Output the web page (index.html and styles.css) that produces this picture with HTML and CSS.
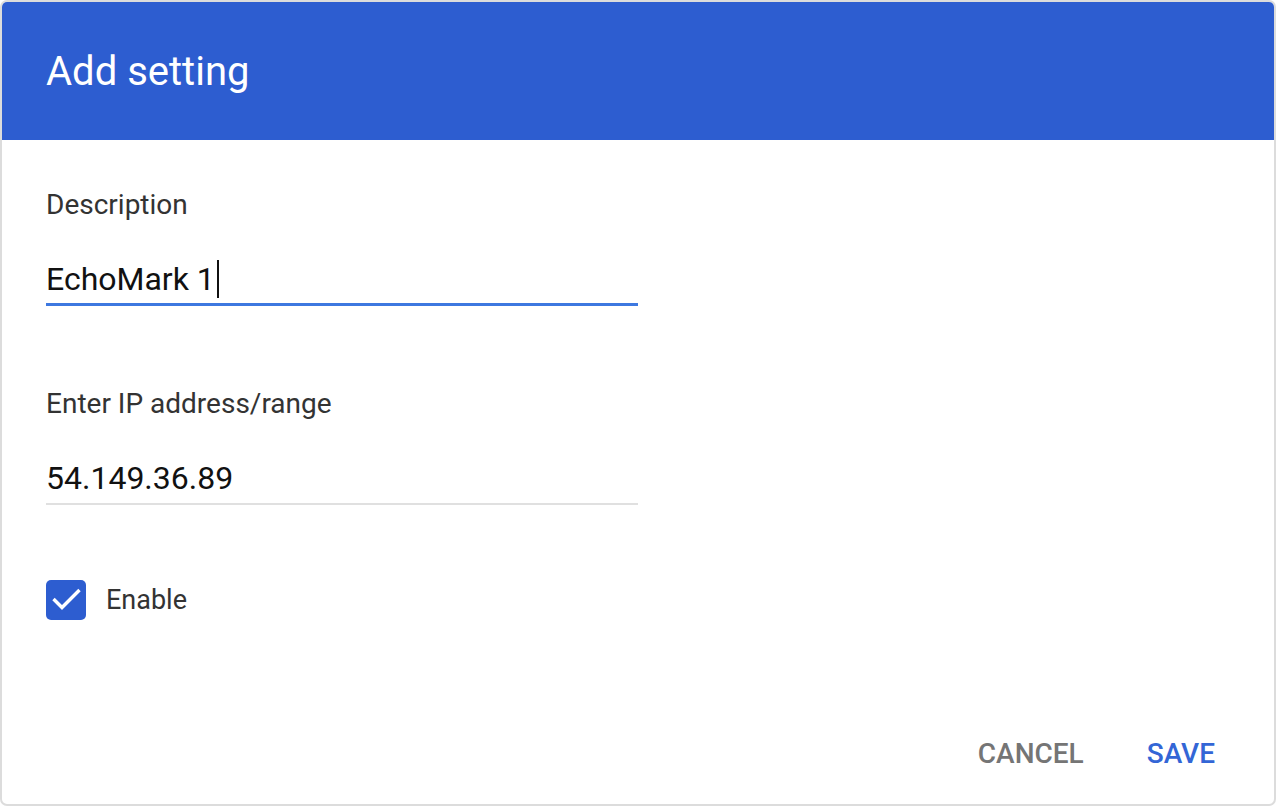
FILE: index.html
```html
<!DOCTYPE html>
<html lang="en">
<head>
    <meta charset="UTF-8">
    <meta name="viewport" content="width=device-width, initial-scale=1.0">
    <title>Add setting</title>
    <link rel="stylesheet" href="styles.css">
</head>
<body>
    <div class="dialog">
        <header>
            <h1>Add setting</h1>
        </header>

        <form>
            <label class="field">
                <span>Description</span>
                <div class="input focused">EchoMark 1<i class="caret"></i></div>
            </label>

            <label class="field">
                <span>Enter IP address/range</span>
                <div class="input">54.149.36.89</div>
            </label>

            <label class="check">
                <span class="box">
                    <svg viewBox="0 0 40 40" width="40" height="40">
                        <path d="M7.5 19l8.5 8.5L33.5 10" fill="none" stroke="#fff" stroke-width="3.4"/>
                    </svg>
                </span>
                Enable
            </label>
        </form>

        <footer>
            <button class="cancel">Cancel</button>
            <button class="save">Save</button>
        </footer>
    </div>
</body>
</html>
```

FILE: styles.css
```css
* {
    box-sizing: border-box;
}

html, body {
    margin: 0;
    height: 100%;
}

body {
    font-family: Roboto, 'Liberation Sans', sans-serif;
    background: #fff;
    color: #212121;
}

.dialog {
    height: 100%;
    border: 2px solid #dcdcdc;
    border-radius: 7px;
    overflow: hidden;
    display: flex;
    flex-direction: column;
}

header {
    background: #2d5dd0;
    height: 138px;
    padding: 0 44px;
    display: flex;
    align-items: center;

    h1 {
        margin: 0;
        color: #fff;
        font-size: 40px;
        font-weight: 400;
    }
}

form {
    flex-grow: 1;
    padding: 49px 44px 0;
    display: flex;
    flex-direction: column;
}

.field {
    display: flex;
    flex-direction: column;
    width: 592px;
    margin-bottom: 82px;

    > span {
        font-size: 28px;
        line-height: 32px;
        color: #333;
    }

    .input {
        margin-top: 38px;
        font-size: 32px;
        line-height: 40px;
        color: #111;
        padding-bottom: 5px;
        border-bottom: 2px solid #e0e0e0;
        display: flex;
        align-items: center;
    }

    .focused {
        padding-bottom: 4px;
        border-bottom: 3px solid #3d78e0;
    }

    &:nth-child(2) {
        margin-bottom: 75px;
    }
}

.caret {
    width: 2px;
    height: 38px;
    background: #111;
    margin-left: 2px;
}

.check {
    display: flex;
    align-items: center;
    gap: 20px;
    font-size: 27px;
    color: #333;

    .box {
        width: 40px;
        height: 40px;
        border-radius: 5px;
        background: #2d5dd0;
        display: flex;
    }
}

footer {
    display: flex;
    justify-content: flex-end;
    gap: 39px;
    padding: 0 47px 24px;

    button {
        background: none;
        border: 0;
        font-family: inherit;
        font-size: 28px;
        font-weight: 500;
        text-transform: uppercase;
        padding: 10px 12px;
        cursor: pointer;
    }

    .cancel {
        color: #757575;
    }

    .save {
        color: #3366d6;
    }
}
```
